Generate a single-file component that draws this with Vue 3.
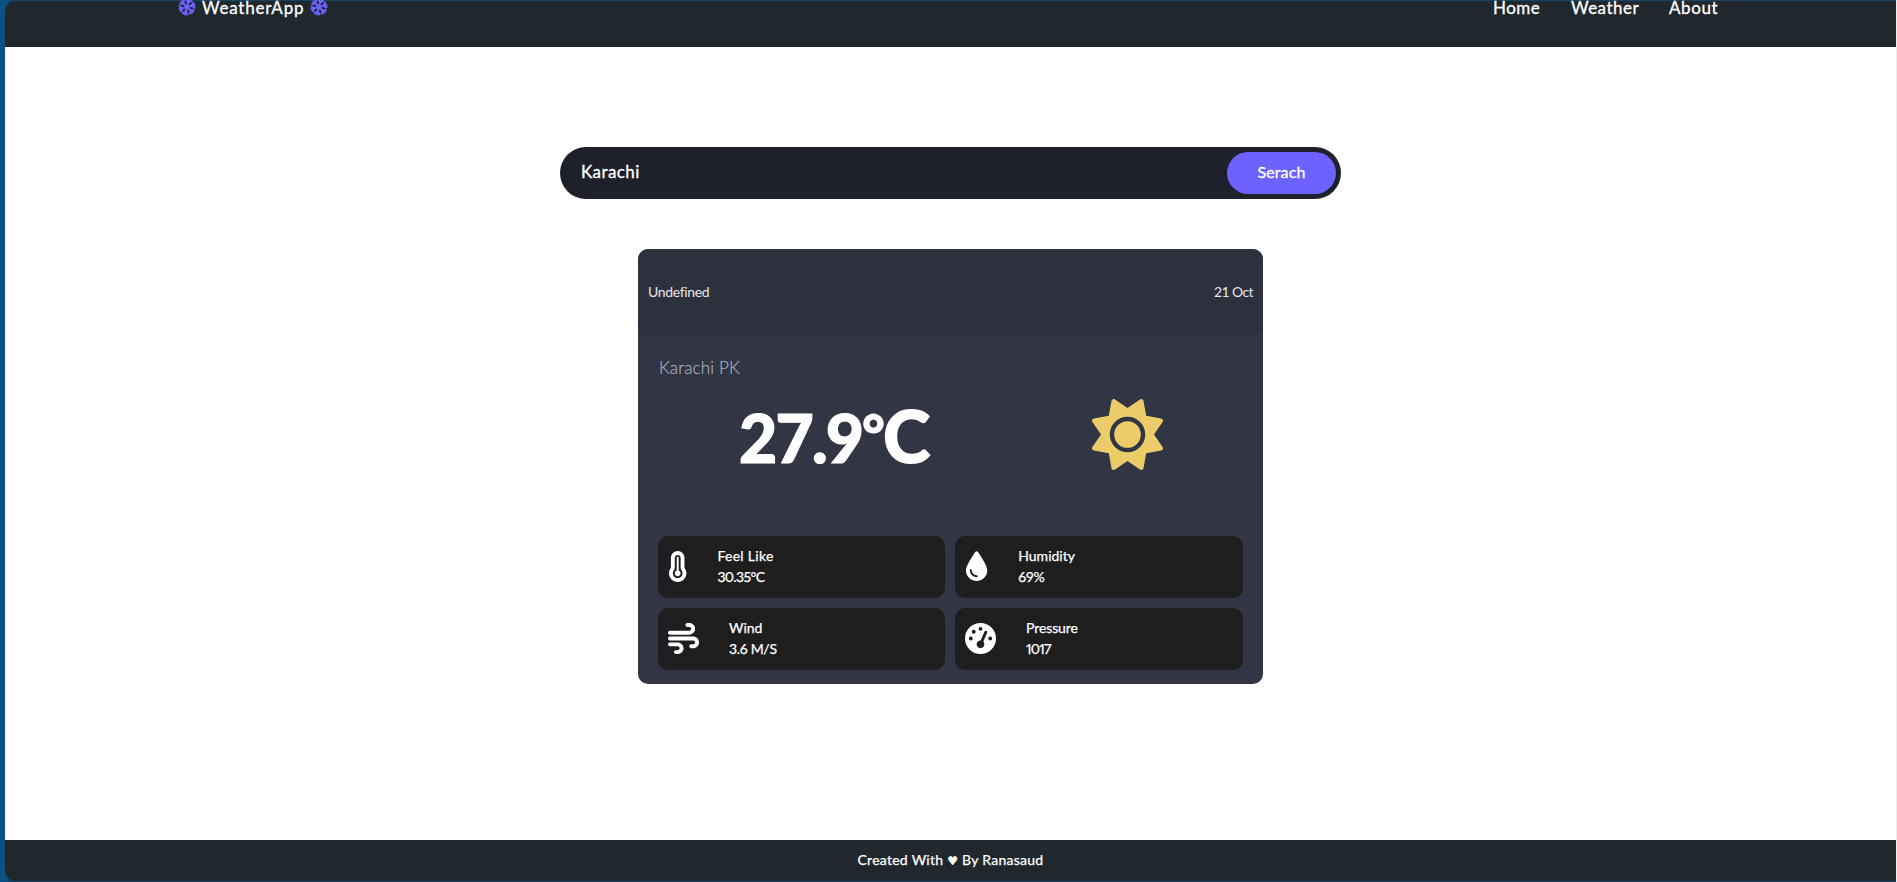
<script setup>
const links = [
  { name: 'Home', cls: 'home' },
  { name: 'Weather', cls: 'weather' },
  { name: 'About', cls: 'about' },
]

const stats = [
  {
    label: 'Feel Like', value: '30.35°C', cls: 'feel', box: '0 0 320 512',
    path: 'M160 64c-26.5 0-48 21.5-48 48V276.5c0 17.3-7.1 31.9-15.3 42.5C86.2 332.6 80 349.5 80 368c0 44.2 35.8 80 80 80s80-35.8 80-80c0-18.5-6.2-35.4-16.7-48.9c-8.2-10.6-15.3-25.2-15.3-42.5V112c0-26.5-21.5-48-48-48zM48 112C48 50.2 98.1 0 160 0s112 50.1 112 112V276.5c0 .1 .1 .3 .2 .6c.2 .6 .8 1.6 1.7 2.8c18.9 24.4 30.1 55 30.1 88.1c0 79.5-64.5 144-144 144S16 447.5 16 368c0-33.2 11.2-63.8 30.1-88.1c.9-1.2 1.5-2.2 1.7-2.8c.1-.3 .2-.5 .2-.6V112zM208 368c0 26.5-21.5 48-48 48s-48-21.5-48-48c0-20.9 13.4-38.7 32-45.3V112c0-8.8 7.2-16 16-16s16 7.2 16 16V322.7c18.6 6.6 32 24.4 32 45.3z',
  },
  {
    label: 'Humidity', value: '69%', cls: 'humidity', box: '0 0 384 512',
    path: 'M16 319.1C16 245.9 118.3 89.43 166.9 19.3C179.2 1.585 204.8 1.585 217.1 19.3C265.7 89.43 368 245.9 368 319.1C368 417.2 289.2 496 192 496C94.8 496 16 417.2 16 319.1zM112 319.1C112 311.2 104.8 303.1 96 303.1C87.16 303.1 80 311.2 80 319.1C80 381.9 130.1 432 192 432C200.8 432 208 424.8 208 416C208 407.2 200.8 400 192 400C147.8 400 112 364.2 112 319.1z',
  },
  {
    label: 'Wind', value: '3.6 M/S', cls: 'wind', box: '0 0 512 512',
    path: 'M288 32c0 17.7 14.3 32 32 32h32c17.7 0 32 14.3 32 32s-14.3 32-32 32H32c-17.7 0-32 14.3-32 32s14.3 32 32 32H352c53 0 96-43 96-96s-43-96-96-96H320c-17.7 0-32 14.3-32 32zm64 352c0 17.7 14.3 32 32 32h32c53 0 96-43 96-96s-43-96-96-96H32c-17.7 0-32 14.3-32 32s14.3 32 32 32H416c17.7 0 32 14.3 32 32s-14.3 32-32 32H384c-17.7 0-32 14.3-32 32zM128 512h32c53 0 96-43 96-96s-43-96-96-96H32c-17.7 0-32 14.3-32 32s14.3 32 32 32H160c17.7 0 32 14.3 32 32s-14.3 32-32 32H128c-17.7 0-32 14.3-32 32s14.3 32 32 32z',
  },
  {
    label: 'Pressure', value: '1017', cls: 'pressure', box: '0 0 512 512',
    path: 'M0 256a256 256 0 1 1 512 0A256 256 0 1 1 0 256zM288 96a32 32 0 1 0 -64 0 32 32 0 1 0 64 0zM256 416c35.3 0 64-28.7 64-64c0-17.4-6.9-33.1-18.1-44.6L366 161.7c5.3-12.1-.2-26.3-12.3-31.6s-26.3 .2-31.6 12.3L257.9 288c-.6 0-1.3 0-1.9 0c-35.3 0-64 28.7-64 64s28.7 64 64 64zM176 144a32 32 0 1 0 -64 0 32 32 0 1 0 64 0zM96 288a32 32 0 1 0 0-64 32 32 0 1 0 0 64zm352-32a32 32 0 1 0 -64 0 32 32 0 1 0 64 0z',
  },
]
</script>

<template>
  <div class="backdrop">
    <div class="window">
      <nav class="nav">
        <div class="brand">
          <svg class="flake" viewBox="-8.8 -8.8 17.6 17.6">
            <g v-for="a in 6" :key="a" :transform="`rotate(${a * 60 + 15})`">
              <path d="M0 0V-8.4M-3 -7.4L0 -4.8L3 -7.4" />
            </g>
          </svg>
          <span class="brand-name">WeatherApp</span>
          <svg class="flake" viewBox="-8.8 -8.8 17.6 17.6">
            <g v-for="a in 6" :key="a" :transform="`rotate(${a * 60 + 15})`">
              <path d="M0 0V-8.4M-3 -7.4L0 -4.8L3 -7.4" />
            </g>
          </svg>
        </div>
        <div class="links">
          <a v-for="l in links" :key="l.name" :class="l.cls">{{ l.name }}</a>
        </div>
      </nav>

      <main class="main">
        <div class="search">
          <span class="query">Karachi</span>
          <button class="submit"><span>Serach</span></button>
        </div>

        <section class="card">
          <header class="card-head">
            <span class="day">Undefined</span>
            <span class="date">21 Oct</span>
          </header>
          <div class="city"><span>Karachi PK</span></div>
          <div class="reading">
            <div class="temp">27.9<span class="deg">°</span><span class="unit">C</span></div>
            <svg class="sun" viewBox="0 0 512 512">
              <path d="M361.5 1.2c5 2.1 8.6 6.6 9.6 11.9L391 121l107.9 19.8c5.3 1 9.8 4.6 11.9 9.6s1.5 10.7-1.6 15.2L446.9 256l62.3 90.3c3.1 4.5 3.7 10.2 1.6 15.2s-6.6 8.6-11.9 9.6L391 391 371.1 498.9c-1 5.3-4.6 9.8-9.6 11.9s-10.7 1.5-15.2-1.6L256 446.9l-90.3 62.3c-4.5 3.1-10.2 3.7-15.2 1.6s-8.6-6.6-9.6-11.9L121 391 13.1 371.1c-5.3-1-9.8-4.6-11.9-9.6s-1.5-10.7 1.6-15.2L65.1 256 2.8 165.7c-3.1-4.5-3.7-10.2-1.6-15.2s6.6-8.6 11.9-9.6L121 121 140.9 13.1c1-5.3 4.6-9.8 9.6-11.9s10.7-1.5 15.2 1.6L256 65.1 346.3 2.8c4.5-3.1 10.2-3.7 15.2-1.6zM160 256a96 96 0 1 1 192 0 96 96 0 1 1 -192 0zm224 0a128 128 0 1 0 -256 0 128 128 0 1 0 256 0z" />
            </svg>
          </div>
          <div class="stats">
            <div v-for="s in stats" :key="s.label" class="stat" :class="s.cls">
              <svg class="stat-icon" :viewBox="s.box"><path :d="s.path" /></svg>
              <div class="stat-text">
                <div class="label">{{ s.label }}</div>
                <div class="value">{{ s.value }}</div>
              </div>
            </div>
          </div>
        </section>
      </main>

      <footer class="footer"><span>Created With <i class="heart">♥</i> By Ranasaud</span></footer>
    </div>
  </div>
</template>

<style>
body { background: #fff; }
</style>

<style scoped>
* { box-sizing: border-box; }
.backdrop {
  width: 1897px;
  height: 882px;
  padding: 1px 1px 1px 5px;
  background: linear-gradient(90deg, #0b5186 0, #0b5186 5px, #174466 12px, #174466 1896px, #e8edf0 1896px);
  font-family: Lato, "Open Sans", sans-serif;
  color: #fff;
}
.window {
  display: flex;
  flex-direction: column;
  height: 880px;
}
.nav {
  display: flex;
  justify-content: space-between;
  height: 46px;
  padding: 0 177px 0 173px;
  border-radius: 10px 0 0 0;
  background: #20282e;
  font-size: 17px;
  line-height: 13px;
  -webkit-text-stroke: 0.3px #fff;
}
.brand { display: flex; height: 13px; }
.flake { width: 18px; height: 18px; margin-top: -3px; fill: none; stroke: #6c63ff; stroke-width: 2.1; }
.brand-name { width: 101px; margin: 0 7px 0 6px; white-space: nowrap; letter-spacing: 0.8px; }
.links { display: flex; gap: 31px; }
.links a { white-space: nowrap; }
.home { width: 47px; letter-spacing: 0.5px; }
.weather { width: 67px; letter-spacing: 0.5px; }
.about { width: 50px; letter-spacing: 0.6px; }

.main { flex: 1; display: flex; flex-direction: column; align-items: center; padding-top: 100px; background: #fff; }
.search {
  display: flex;
  align-items: center;
  justify-content: space-between;
  width: 781px;
  height: 52px;
  padding: 0 5px 0 21px;
  border-radius: 26px;
  background: #1e202b;
  font-size: 17px;
}
.query { line-height: 42px; padding-bottom: 2px; letter-spacing: 0.4px; -webkit-text-stroke: 0.3px #fff; }
.submit {
  width: 109px;
  height: 42px;
  padding: 0 0 4px;
  border: 0;
  border-radius: 21px;
  background: #6c63ff;
  color: #fff;
  font: 16px Lato, sans-serif;
  letter-spacing: 0.1px;
  -webkit-text-stroke: 0.3px #fff;
}
.card {
  width: 625px;
  height: 435px;
  margin-top: 50px;
  border-radius: 10px;
  background: #323544;
  overflow: hidden;
}
.card-head {
  display: flex;
  justify-content: space-between;
  height: 87px;
  padding: 0 10px;
  border-radius: 10px;
  background: #2d303d;
  font-size: 14px;
  line-height: 86px;
  color: #e6e6e9;
}
.day { letter-spacing: -0.35px; }
.date { letter-spacing: -0.6px; }
.city {
  height: 58px;
  padding: 20px 20px 0 21px;
  font-size: 17px;
  line-height: 24px;
  font-weight: 300;
  letter-spacing: 0.15px;
  color: #a9b3bd;
  -webkit-text-stroke: 0.2px #a9b3bd;
}
.reading { display: flex; height: 142px; padding: 0 100px 0 101px; justify-content: space-between; }
.temp {
  height: 84px;
  font-size: 66px;
  font-weight: 900;
  line-height: 88px;
  white-space: nowrap;
  letter-spacing: -1.8px;
  -webkit-text-stroke: 1.2px #fff;
}
.deg { font-size: 54px; line-height: 1; position: relative; top: -9px; }
.unit { font-size: 72px; line-height: 1; letter-spacing: 0; }
.sun { width: 71px; height: 71px; margin-top: 5px; fill: #eccc68; }
.stats {
  display: grid;
  grid-template-columns: 287px 1fr;
  gap: 10px;
  padding: 0 20px;
}
.stat { display: flex; gap: 30px; align-items: center; height: 62px; padding: 0 10px; border-radius: 10px; background: #1e1e1e; }
.stat-icon { height: 31px; margin-top: -1px; fill: #fff; }
.stat-text { font-size: 14px; line-height: 21px; padding-bottom: 3px; white-space: nowrap; -webkit-text-stroke: 0.25px #fff; }
.value { font-variant-numeric: proportional-nums; }
.feel .label { letter-spacing: 0.3px; }
.feel .value { letter-spacing: -0.6px; }
.wind .value { letter-spacing: -0.3px; }
.humidity .value { letter-spacing: -0.2px; }
.pressure .label { letter-spacing: -0.1px; }
.pressure .value { letter-spacing: -0.8px; }
.footer {
  height: 41px;
  border-radius: 0 0 0 10px;
  background: #20282e;
  text-align: center;
  font-size: 14px;
  line-height: 39px;
  letter-spacing: 0.27px;
  -webkit-text-stroke: 0.25px #fff;
}
.heart { font-family: "DejaVu Sans", sans-serif; font-style: normal; font-size: 12px; line-height: 1; }
</style>
